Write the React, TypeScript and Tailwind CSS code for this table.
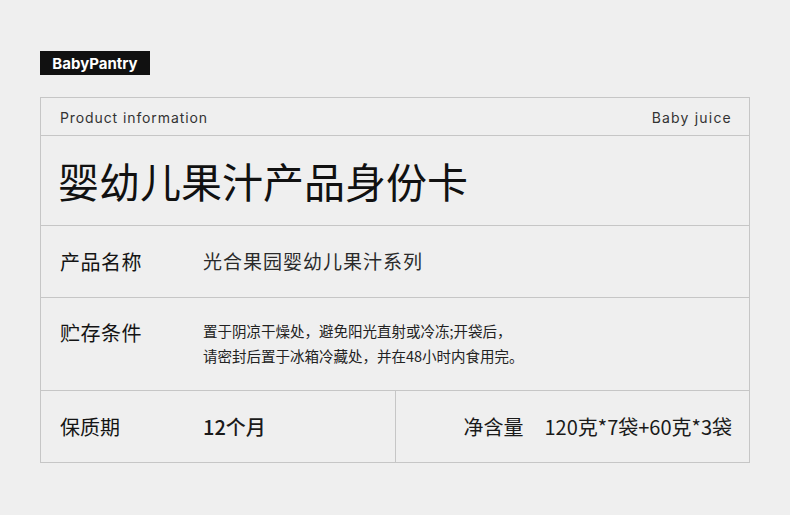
import React from "react";

const cjk = "font-['Noto_Sans_CJK_SC','Noto_Sans',sans-serif]";

export default function App() {
  return (
    <div className={`w-[790px] h-[515px] bg-[#efefef] pt-[51px] px-[40px] text-[#1a1a1a] ${cjk}`}>
      <div className="flex h-[24px] w-[110px] items-center justify-center bg-[#111] text-[15px] font-bold leading-none text-white font-['Inter',sans-serif]">
        BabyPantry
      </div>

      <div className="mt-[22px] w-[710px] border border-[#c6c6c6]">
        {/* header */}
        <div className="flex h-[38px] items-center justify-between border-b border-[#c6c6c6] pl-[19px] pr-[17px] pt-[2px] text-[14px] text-[#333] font-['Inter',sans-serif] tracking-[0.9px]">
          <span>Product information</span>
          <span className="tracking-[1.2px]">Baby juice</span>
        </div>

        {/* title */}
        <div className="flex h-[90px] items-center border-b border-[#c6c6c6] px-[17px]">
          <h1 className="text-[41px] font-normal leading-none text-[#111]">婴幼儿果汁产品身份卡</h1>
        </div>

        {/* name */}
        <div className="flex h-[72px] items-center border-b border-[#c6c6c6] pl-[19px]">
          <span className="w-[143px] text-[20px] tracking-[0.5px] text-[#141414]">产品名称</span>
          <span className="text-[19px] tracking-[1px] text-[#2a2a2a]">光合果园婴幼儿果汁系列</span>
        </div>

        {/* storage */}
        <div className="flex h-[93px] items-start border-b border-[#c6c6c6] pl-[19px] pt-[20px]">
          <span className="w-[143px] text-[20px] leading-[30px] tracking-[0.5px] text-[#141414]">贮存条件</span>
          <div className="text-[14.5px] leading-[25px] text-[#222]">
            <p>置于阴凉干燥处，避免阳光直射或冷冻;开袋后，</p>
            <p>请密封后置于冰箱冷藏处，并在48小时内食用完。</p>
          </div>
        </div>

        {/* shelf life / net */}
        <div className="flex h-[71px]">
          <div className="flex w-[355px] items-center border-r border-[#c6c6c6] pl-[19px]">
            <span className="w-[143px] text-[20px] text-[#141414]">保质期</span>
            <span className="text-[20px] font-medium">12个月</span>
          </div>
          <div className="flex flex-1 items-center justify-end gap-[21px] pr-[17px] text-[20px]">
            <span>净含量</span>
            <span>120克*7袋+60克*3袋</span>
          </div>
        </div>
      </div>
    </div>
  );
}
